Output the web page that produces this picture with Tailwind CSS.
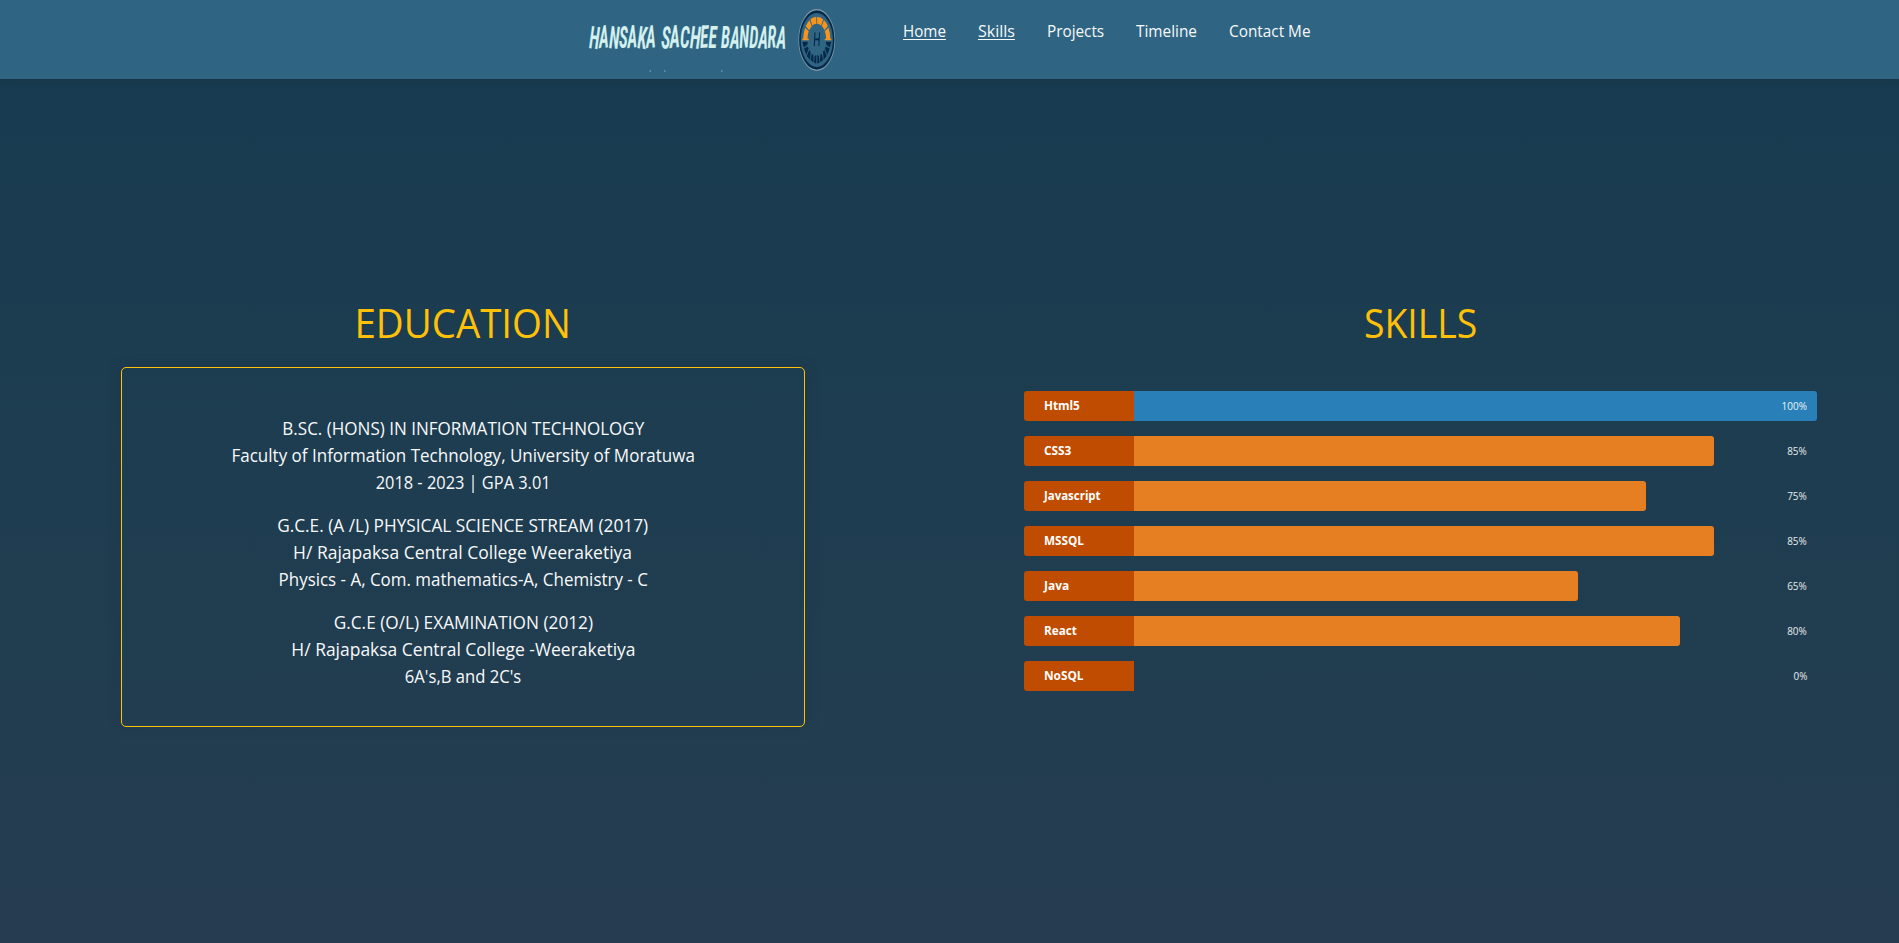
<!DOCTYPE html>
<html lang="en">
<head>
<meta charset="utf-8">
<title>Hansaka Sachee Bandara</title>
<script src="https://cdn.jsdelivr.net/npm/@tailwindcss/browser@4"></script>
</head>
<body class="h-[943px] overflow-hidden flex flex-col bg-linear-to-b from-[#173a50] via-[#1e3d50] to-[#263d51] font-['Open_Sans','Noto_Sans',sans-serif] text-[#f8f9fa]">

<header class="relative h-[79px] shrink-0 flex bg-[#2f6583] shadow-[0_2px_6px_rgba(20,45,50,0.35)]">
  <svg class="ml-[580px] w-[260px] h-[79px]" viewBox="580 0 260 79" aria-label="Hansaka Sachee Bandara">
    <g fill="#d5f1ef" stroke="#d5f1ef" stroke-width=".2" font-family="Roboto, sans-serif" font-weight="600" font-style="italic" font-size="31" style="font-stretch:75%">
      <text x="589" y="48" textLength="67" lengthAdjust="spacingAndGlyphs" rotate="4 -3 3 0 -4 4 -3">HANSAKA</text>
      <text x="661" y="48" textLength="56" lengthAdjust="spacingAndGlyphs" rotate="3 -4 0 3 -3 0">SACHEE</text>
      <text x="721" y="48" textLength="65" lengthAdjust="spacingAndGlyphs" rotate="0 3 -3 0 3 -3 3">BANDARA</text>
    </g>
    <path d="M649.500 71h1.500M664 71h1.500M721 71h1.500" stroke="#8fb3c2" stroke-width="1"/>
    <g fill="none" transform="translate(816.800 40) scale(1 1.680)">
      <circle r="18" stroke="#7d97a5" stroke-width=".8"/>
      <circle r="16.800" stroke="#06294a" stroke-width="1.500"/>
      <path d="M-11.500-.3A11.500 11.500 0 0 1 11.500-.3" stroke="#f7941e" stroke-width="4.200" stroke-dasharray="6.200 .9 4.400 .8 5.200 .8 5.200 .8 4.400 .9 7"/>
      <path d="M-14.500-.3h6.500M14.500-.3h-6.500" stroke="#f7941e" stroke-width="1"/>
      <g fill="#06294a">
        <path d="M-14.500 1H-9L-9.500 2.800-13 4.500Z"/>
        <path d="M-12.800 5-9 3.800-8.200 5.200-10.500 9Z"/>
        <path d="M-10 9.500-7.500 6-6.200 7-6.800 11.800Z"/>
        <path d="M-6.200 12-5 8.200-3.500 8.800-3.200 13.200Z"/>
        <path d="M-2.700 13.500-2.200 9.500-.5 9V14Z"/>
        <path d="M14.500 1H9L9.500 2.800 13 4.500Z"/>
        <path d="M12.800 5 9 3.800 8.200 5.200 10.500 9Z"/>
        <path d="M10 9.500 7.500 6 6.200 7 6.800 11.800Z"/>
        <path d="M6.200 12 5 8.200 3.500 8.800 3.200 13.200Z"/>
        <path d="M2.700 13.500 2.200 9.500.5 9V14Z"/>
      </g>
      <path d="M-1.800-4.500-2.500 3.600M2.800-4.500 2 3.600M-2.300-.2 2.400-.6" stroke="#06294a" stroke-width="1.100"/>
    </g>
  </svg>
  <nav class="flex gap-8 pt-[19px] ml-[63px] text-base leading-6 whitespace-nowrap">
    <a class="w-[43px]"><span class="inline-block origin-left scale-x-[.949] underline underline-offset-2">Home</span></a>
    <a class="w-[37px]"><span class="inline-block origin-left underline underline-offset-2">Skills</span></a>
    <a class="w-[57px]"><span class="inline-block origin-left scale-x-[.955]">Projects</span></a>
    <a class="w-[61px]"><span class="inline-block origin-left scale-x-[.96]">Timeline</span></a>
    <a class="w-[82px]"><span class="inline-block origin-left scale-x-[.959]">Contact Me</span></a>
  </nav>
</header>

<main class="flex items-start">
  <section class="ml-[121px] w-[684px] pt-[220px] text-center">
    <h1 class="text-[40px] leading-[47px] text-[#ffc107]"><span class="inline-block scale-x-[.961]">EDUCATION</span></h1>
    <div class="mt-[21px] h-[360px] rounded-[5px] border border-[#ffc107] pt-[47px] text-lg leading-[27px] shadow-[0_0_14px_rgba(30,48,70,0.3)] flex flex-col gap-4">
      <div>
        <p><span class="inline-block scale-x-[.946]">B.SC. (HONS) IN INFORMATION TECHNOLOGY</span></p>
        <p><span class="inline-block scale-x-[.945]">Faculty of Information Technology, University of Moratuwa</span></p>
        <p><span class="inline-block scale-x-[.91]">2018 - 2023 | GPA 3.01</span></p>
      </div>
      <div>
        <p><span class="inline-block scale-x-[.958]">G.C.E. (A /L) PHYSICAL SCIENCE STREAM (2017)</span></p>
        <p><span class="inline-block scale-x-[.971]">H/ Rajapaksa Central College Weeraketiya</span></p>
        <p><span class="inline-block scale-x-[.941]">Physics - A, Com. mathematics-A, Chemistry - C</span></p>
      </div>
      <div>
        <p><span class="inline-block scale-x-[.958]">G.C.E (O/L) EXAMINATION (2012)</span></p>
        <p><span class="inline-block scale-x-[.97]">H/ Rajapaksa Central College -Weeraketiya</span></p>
        <p><span class="inline-block scale-x-[.923]">6A's,B and 2C's</span></p>
      </div>
    </div>
  </section>

  <section class="ml-[219px] w-[793px] pt-[220px]">
    <h1 class="text-center text-[40px] leading-[47px] text-[#ffc107]"><span class="inline-block scale-x-[.934]">SKILLS</span></h1>
    <div class="mt-[45px] flex flex-col gap-[15px] text-white">
      <div class="relative h-[30px] flex items-stretch">
        <div class="w-[110px] shrink-0 rounded-l-[3px] bg-[#bf4c00] pl-5 text-[13px] font-bold leading-[29px]"><span class="inline-block origin-left scale-x-[.9]">Html5</span></div>
        <div class="flex-1"><div class="h-full rounded-r-[3px] bg-[#2980b9]" style="width:100%"></div></div>
        <span class="absolute right-[10px] top-0 text-[11px] leading-[30px] text-white/90 origin-right scale-x-[.91]">100%</span>
      </div>
      <div class="relative h-[30px] flex items-stretch">
        <div class="w-[110px] shrink-0 rounded-l-[3px] bg-[#bf4c00] pl-5 text-[13px] font-bold leading-[29px]"><span class="inline-block origin-left scale-x-[.91]">CSS3</span></div>
        <div class="flex-1"><div class="h-full rounded-r-[3px] bg-[#e67e22]" style="width:84.900%"></div></div>
        <span class="absolute right-[10px] top-0 text-[11px] leading-[30px] text-white/90 origin-right scale-x-[.9]">85%</span>
      </div>
      <div class="relative h-[30px] flex items-stretch">
        <div class="w-[110px] shrink-0 rounded-l-[3px] bg-[#bf4c00] pl-5 text-[13px] font-bold leading-[29px]"><span class="inline-block origin-left scale-x-[.88]">Javascript</span></div>
        <div class="flex-1"><div class="h-full rounded-r-[3px] bg-[#e67e22]" style="width:75%"></div></div>
        <span class="absolute right-[10px] top-0 text-[11px] leading-[30px] text-white/90 origin-right scale-x-[.9]">75%</span>
      </div>
      <div class="relative h-[30px] flex items-stretch">
        <div class="w-[110px] shrink-0 rounded-l-[3px] bg-[#bf4c00] pl-5 text-[13px] font-bold leading-[29px]"><span class="inline-block origin-left scale-x-[.9]">MSSQL</span></div>
        <div class="flex-1"><div class="h-full rounded-r-[3px] bg-[#e67e22]" style="width:84.900%"></div></div>
        <span class="absolute right-[10px] top-0 text-[11px] leading-[30px] text-white/90 origin-right scale-x-[.9]">85%</span>
      </div>
      <div class="relative h-[30px] flex items-stretch">
        <div class="w-[110px] shrink-0 rounded-l-[3px] bg-[#bf4c00] pl-5 text-[13px] font-bold leading-[29px]"><span class="inline-block origin-left scale-x-[.92]">Java</span></div>
        <div class="flex-1"><div class="h-full rounded-r-[3px] bg-[#e67e22]" style="width:65%"></div></div>
        <span class="absolute right-[10px] top-0 text-[11px] leading-[30px] text-white/90 origin-right scale-x-[.9]">65%</span>
      </div>
      <div class="relative h-[30px] flex items-stretch">
        <div class="w-[110px] shrink-0 rounded-l-[3px] bg-[#bf4c00] pl-5 text-[13px] font-bold leading-[29px]"><span class="inline-block origin-left scale-x-[.9]">React</span></div>
        <div class="flex-1"><div class="h-full rounded-r-[3px] bg-[#e67e22]" style="width:80%"></div></div>
        <span class="absolute right-[10px] top-0 text-[11px] leading-[30px] text-white/90 origin-right scale-x-[.9]">80%</span>
      </div>
      <div class="relative h-[30px] flex items-stretch">
        <div class="w-[110px] shrink-0 rounded-l-[3px] bg-[#bf4c00] pl-5 text-[13px] font-bold leading-[29px]"><span class="inline-block origin-left scale-x-[.91]">NoSQL</span></div>
        <div class="flex-1"><div class="h-full rounded-r-[3px] bg-[#e67e22]" style="width:0%"></div></div>
        <span class="absolute right-[10px] top-0 text-[11px] leading-[30px] text-white/90 origin-right scale-x-[.9]">0%</span>
      </div>
    </div>
  </section>
</main>
</body>
</html>
